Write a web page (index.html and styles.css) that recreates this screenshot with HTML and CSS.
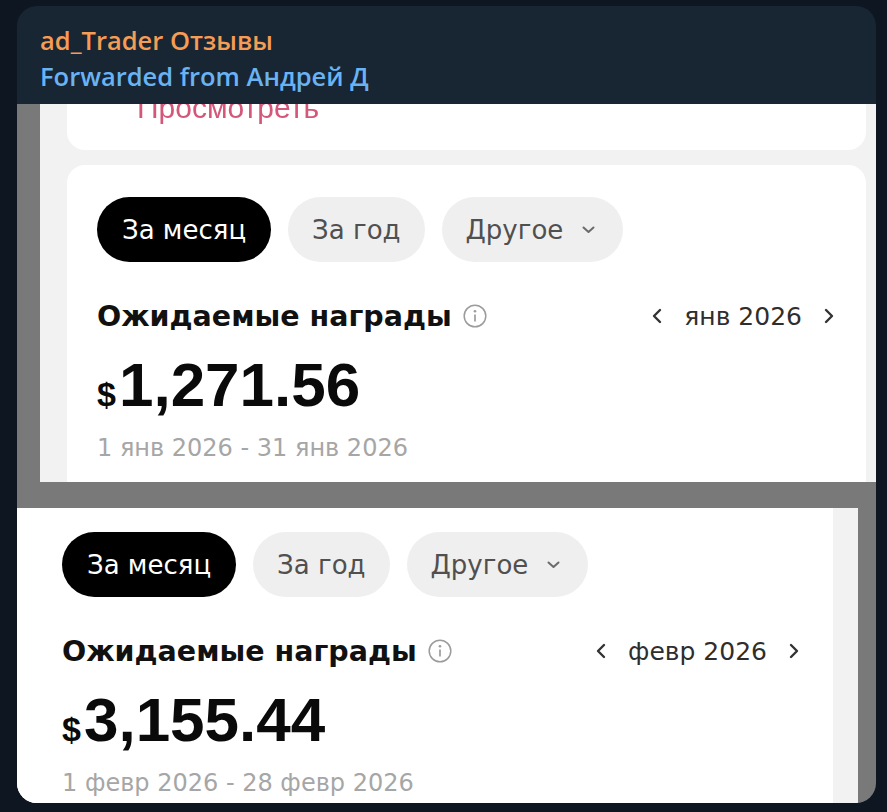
FILE: index.html
```html
<!DOCTYPE html>
<html lang="ru">
<head>
    <meta charset="UTF-8">
    <meta name="viewport" content="width=device-width, initial-scale=1.0">
    <title>ad_Trader Отзывы</title>
    <link rel="stylesheet" href="styles.css">
</head>
<body>
<div class="bubble">
    <div class="meta">
        <div class="author">ad_Trader Отзывы</div>
        <div class="forwarded">Forwarded from Андрей Д</div>
    </div>
    <div class="photo">
        <!-- first screenshot: January -->
        <div class="shot shot-jan">
            <div class="screen">
                <div class="card card-link">
                    <span class="link">Просмотреть</span>
                </div>
                <div class="card card-rewards">
                    <div class="filters">
                        <span class="pill pill-active">За месяц</span>
                        <span class="pill">За год</span>
                        <span class="pill pill-menu">Другое
                            <svg class="caret" width="13" height="8" viewBox="0 0 13 8"><polyline points="1.5,1.5 6.5,6 11.5,1.5" fill="none" stroke="#6b6b6b" stroke-width="2" stroke-linecap="round" stroke-linejoin="round"/></svg>
                        </span>
                    </div>
                    <div class="title-row">
                        <div class="title">Ожидаемые награды
                            <svg class="info" width="24" height="24" viewBox="0 0 24 24"><circle cx="12" cy="12" r="10.8" fill="none" stroke="#9c9c9c" stroke-width="1.5"/><circle cx="12" cy="7.2" r="1.3" fill="#9c9c9c"/><line x1="12" y1="10.5" x2="12" y2="17.5" stroke="#9c9c9c" stroke-width="1.7"/></svg>
                        </div>
                        <div class="month-nav">
                            <svg class="chev" width="12" height="18" viewBox="0 0 12 18"><polyline points="9,3 3,9 9,15" fill="none" stroke="#333" stroke-width="2.4" stroke-linecap="round" stroke-linejoin="round"/></svg>
                            <span class="month">янв 2026</span>
                            <svg class="chev" width="12" height="18" viewBox="0 0 12 18"><polyline points="3,3 9,9 3,15" fill="none" stroke="#333" stroke-width="2.4" stroke-linecap="round" stroke-linejoin="round"/></svg>
                        </div>
                    </div>
                    <div class="amount"><span class="currency">$</span>1,271.56</div>
                    <div class="period">1 янв 2026 - 31 янв 2026</div>
                </div>
            </div>
        </div>
        <!-- second screenshot: February -->
        <div class="shot shot-feb">
            <div class="screen">
                <div class="card card-rewards">
                    <div class="filters">
                        <span class="pill pill-active">За месяц</span>
                        <span class="pill">За год</span>
                        <span class="pill pill-menu">Другое
                            <svg class="caret" width="13" height="8" viewBox="0 0 13 8"><polyline points="1.5,1.5 6.5,6 11.5,1.5" fill="none" stroke="#6b6b6b" stroke-width="2" stroke-linecap="round" stroke-linejoin="round"/></svg>
                        </span>
                    </div>
                    <div class="title-row">
                        <div class="title">Ожидаемые награды
                            <svg class="info" width="24" height="24" viewBox="0 0 24 24"><circle cx="12" cy="12" r="10.8" fill="none" stroke="#9c9c9c" stroke-width="1.5"/><circle cx="12" cy="7.2" r="1.3" fill="#9c9c9c"/><line x1="12" y1="10.5" x2="12" y2="17.5" stroke="#9c9c9c" stroke-width="1.7"/></svg>
                        </div>
                        <div class="month-nav">
                            <svg class="chev" width="12" height="18" viewBox="0 0 12 18"><polyline points="9,3 3,9 9,15" fill="none" stroke="#333" stroke-width="2.4" stroke-linecap="round" stroke-linejoin="round"/></svg>
                            <span class="month">февр 2026</span>
                            <svg class="chev" width="12" height="18" viewBox="0 0 12 18"><polyline points="3,3 9,9 3,15" fill="none" stroke="#333" stroke-width="2.4" stroke-linecap="round" stroke-linejoin="round"/></svg>
                        </div>
                    </div>
                    <div class="amount"><span class="currency">$</span>3,155.44</div>
                    <div class="period">1 февр 2026 - 28 февр 2026</div>
                </div>
            </div>
        </div>
    </div>
</div>
</body>
</html>
```

FILE: styles.css
```css
body {
  margin: 0;
  background-color: #0e1621;
  font-family: "DejaVu Sans", sans-serif;
  height: 812px;
  overflow: hidden;
}

.bubble {
  margin: 6px 0 0 17px;
  width: 859px;
  height: 797px;
  background-color: #182533;
  border-radius: 20px;
  overflow: hidden;
  display: flex;
  flex-direction: column;
}

.meta {
  flex-shrink: 0;
  padding: 16px 23px 10px;
  font-family: "Open Sans", sans-serif;
  font-weight: 600;
  font-size: 25.5px;
  line-height: 36px;
}

.author {
  color: #f59c55;
}

.forwarded {
  color: #6ab3f3;
}

.photo {
  flex: 1;
  min-height: 0;
  background-color: #7a797a;
  display: flex;
  flex-direction: column;
  gap: 26px;
  overflow: hidden;
}

.shot {
  display: flex;
}

.shot-jan {
  flex-shrink: 0;
  height: 378px;
  padding-left: 23px;
}

.shot-feb {
  flex: 1;
  min-height: 0;
  overflow: hidden;
  padding-right: 18px;
}

.screen {
  flex: 1;
  background-color: #f2f2f2;
  display: flex;
  flex-direction: column;
}

.shot-jan .screen {
  padding: 0 10px 0 27px;
  gap: 15px;
}

.shot-feb .screen {
  padding-right: 25px;
}

.card {
  background-color: #fff;
}

.card-link {
  flex-shrink: 0;
  height: 46px;
  border-radius: 0 0 18px 18px;
  padding-left: 70px;
  overflow: hidden;
}

.link {
  display: block;
  margin-top: -13px;
  font-family: "Liberation Sans", Arial, sans-serif;
  font-size: 30px;
  line-height: 34px;
  color: #d4577a;
  filter: blur(0.6px);
}

.card-rewards {
  flex: 1;
  border-radius: 18px 18px 0 0;
  padding: 32px 31px 0 30px;
}

.shot-feb .card-rewards {
  border-radius: 0;
  padding: 24px 33px 0 45px;
}

.filters {
  display: flex;
  gap: 17px;
}

.pill {
  height: 65px;
  padding: 0 24px;
  border-radius: 33px;
  background-color: #efefef;
  color: #505050;
  font-size: 26px;
  display: flex;
  align-items: center;
}

.pill-active {
  background-color: #000;
  color: #fff;
  padding: 0 25px;
}

.pill-menu {
  gap: 19px;
  padding-right: 28px;
}

.title-row {
  margin-top: 34px;
  height: 40px;
  display: flex;
  align-items: center;
  justify-content: space-between;
}

.title {
  font-size: 28.5px;
  font-weight: bold;
  color: #111;
  display: flex;
  align-items: center;
  gap: 11px;
}

.month-nav {
  display: flex;
  align-items: center;
  gap: 21px;
  font-size: 25px;
  color: #2e2e2e;
}

.amount {
  margin-top: 14px;
  font-family: "Liberation Sans", Arial, sans-serif;
  font-size: 62px;
  line-height: 70px;
  font-weight: bold;
  color: #0a0a0a;
}

.currency {
  font-size: 34px;
  line-height: 1;
  margin-right: 3px;
}

.period {
  margin-top: 12px;
  font-size: 24px;
  line-height: 32px;
  color: #a6a6a6;
}
```
